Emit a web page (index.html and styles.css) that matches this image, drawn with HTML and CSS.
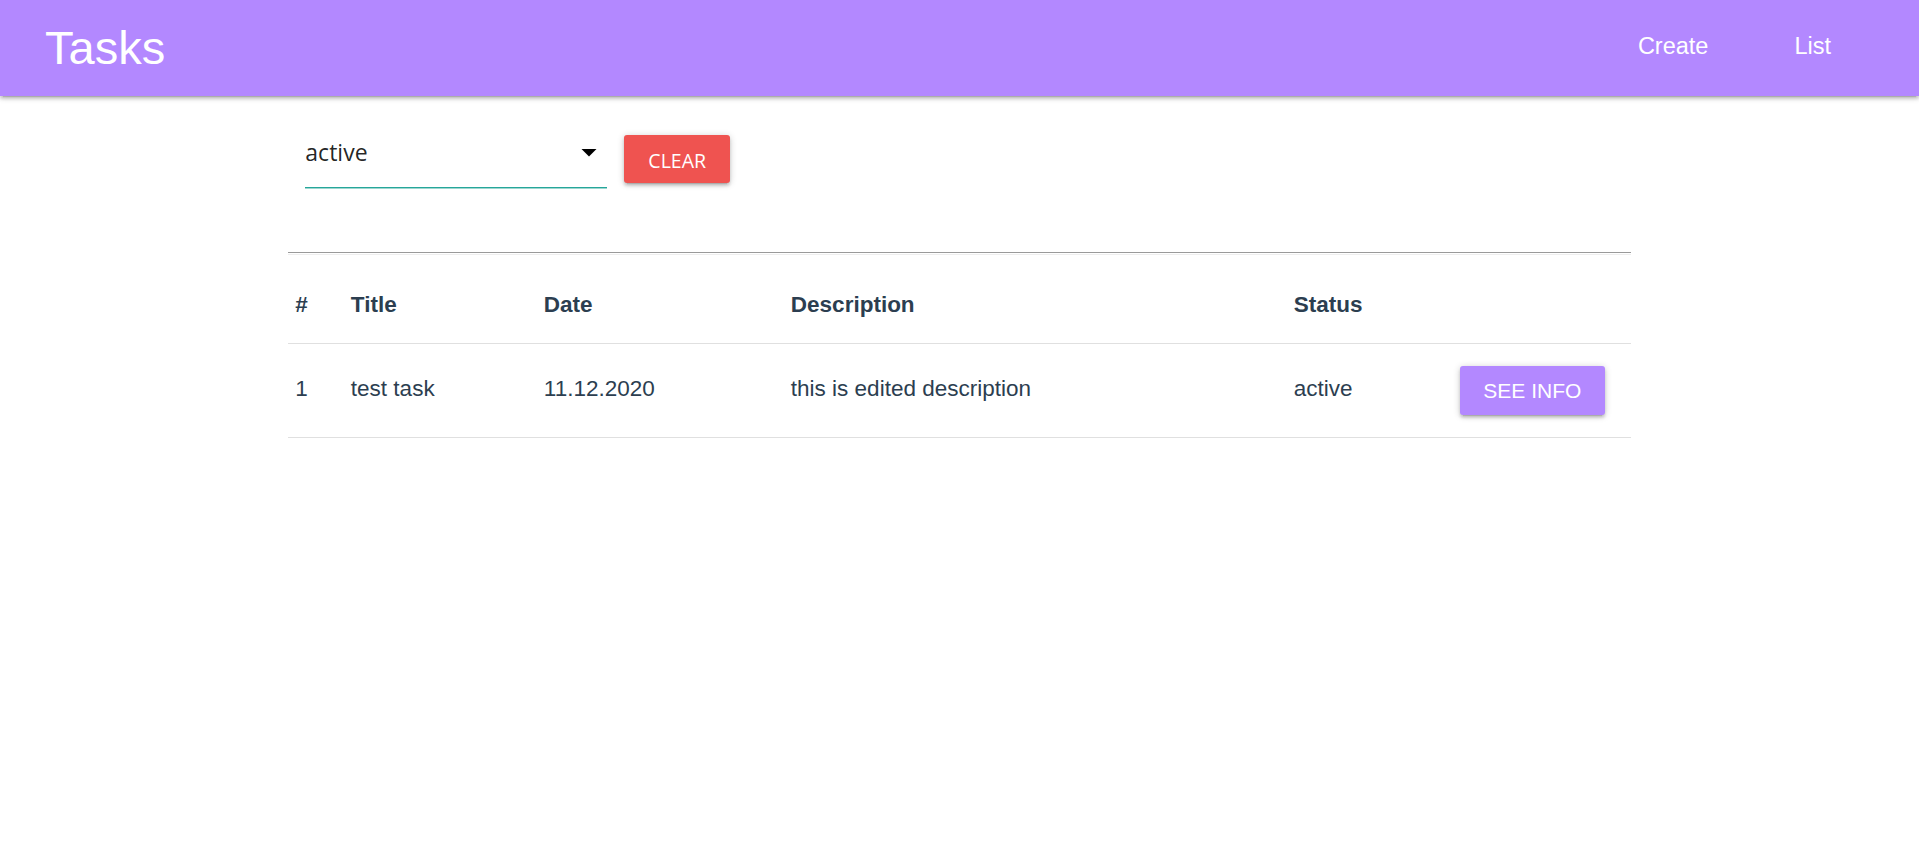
FILE: index.html
```html
<!DOCTYPE html>
<html lang="en">
<head>
<meta charset="utf-8">
<title>Tasks</title>
<link rel="stylesheet" href="styles.css">
</head>
<body>
<header class="navbar">
  <a class="brand" href="#">Tasks</a>
  <ul class="nav-links">
    <li><a href="#">Create</a></li>
    <li><a href="#">List</a></li>
  </ul>
</header>
<main class="container">
  <div class="filter-row">
    <div class="select">
      <span class="select-value">active</span>
      <svg class="caret" viewBox="0 0 24 24" width="36" height="36"><path d="M7 10l5 5 5-5z" fill="#000"/></svg>
    </div>
    <button class="btn-clear">Clear</button>
  </div>
  <div class="divider"></div>
  <table class="tasks">
    <colgroup>
      <col class="c-num"><col class="c-title"><col class="c-date"><col class="c-desc"><col class="c-status"><col class="c-action">
    </colgroup>
    <thead>
      <tr><th>#</th><th>Title</th><th>Date</th><th>Description</th><th>Status</th><th></th></tr>
    </thead>
    <tbody>
      <tr>
        <td class="txt">1</td>
        <td class="txt">test task</td>
        <td class="txt">11.12.2020</td>
        <td class="txt">this is edited description</td>
        <td class="txt">active</td>
        <td><a class="btn-info" href="#">SEE INFO</a></td>
      </tr>
    </tbody>
  </table>
</main>
</body>
</html>
```

FILE: styles.css
```css
html, body {
  margin: 0;
  padding: 0;
  background: #fff;
}
body {
  font-family: "Liberation Sans", Arial, Helvetica, sans-serif;
  color: #2c3e50;
}
.navbar {
  height: 96px;
  background: #b388ff;
  display: flex;
  align-items: center;
  justify-content: space-between;
  padding-left: 45px;
  box-shadow: 0 3px 3px 0 rgba(0,0,0,0.14), 0 4px 1px -3px rgba(0,0,0,0.12), 0 1px 7px 0 rgba(0,0,0,0.2);
  position: relative;
  z-index: 2;
}
.brand {
  color: #fff;
  text-decoration: none;
  font-size: 47px;
  line-height: 96px;
}
.nav-links {
  list-style: none;
  margin: 0 45px 0 0;
  padding: 0;
  display: flex;
}
.nav-links a {
  display: block;
  color: #fff;
  text-decoration: none;
  font-size: 23.5px;
  line-height: 93px;
  padding: 0 43px 3px;
}
.container {
  width: 70%;
  margin: 0 auto;
}
.filter-row {
  display: flex;
  align-items: flex-start;
  margin-top: 20px;
  padding-left: 17.5px;
}
.select {
  width: 302px;
  height: 71px;
  display: flex;
  align-items: center;
  justify-content: space-between;
  border-bottom: 1px solid #26a69a;
  box-shadow: 0 1px 0 0 rgba(38,166,154,0.45);
}
.select-value {
  font-family: "Open Sans", "Noto Sans", sans-serif;
  font-size: 23px;
  color: rgba(0,0,0,0.87);
}
.caret {
  display: block;
}
.btn-clear {
  margin: 19px 0 0 17px;
  height: 48px;
  box-sizing: border-box;
  padding: 3px 24px 0;
  line-height: 45px;
  border: none;
  border-radius: 3px;
  background: #ef5350;
  color: #fff;
  font-family: "Open Sans", "Noto Sans", sans-serif;
  font-size: 19.5px;
  text-transform: uppercase;
  letter-spacing: 0;
  box-shadow: 0 3px 3px 0 rgba(0,0,0,0.14), 0 4px 1px -3px rgba(0,0,0,0.12), 0 1px 7px 0 rgba(0,0,0,0.2);
}
.divider {
  margin-top: 64px;
  height: 1px;
  border-top: 1px solid #9a9a9a;
  border-bottom: 1px solid #eeeeee;
}
.tasks {
  width: 100%;
  margin-top: 11px;
  border-collapse: collapse;
  table-layout: fixed;
  font-size: 22.5px;
}
.c-num { width: 55.5px; }
.c-title { width: 193px; }
.c-date { width: 247px; }
.c-desc { width: 503px; }
.c-status { width: 166px; }
.c-action { width: 179px; }
.tasks tr {
  border-bottom: 1px solid rgba(0,0,0,0.12);
}
.tasks th {
  text-align: left;
  font-weight: bold;
  padding: 22px 7.5px;
  line-height: 33px;
}
.tasks td {
  padding: 22px 7.5px;
  line-height: 33px;
  vertical-align: middle;
}
.tasks td.txt {
  padding-top: 20px;
  padding-bottom: 24px;
}
.btn-info {
  display: inline-block;
  height: 49px;
  line-height: 49px;
  padding: 0 23.5px;
  vertical-align: top;
  background: #b388ff;
  color: #fff;
  text-decoration: none;
  font-size: 21px;
  border-radius: 3px;
  box-shadow: 0 3px 3px 0 rgba(0,0,0,0.14), 0 4px 1px -3px rgba(0,0,0,0.12), 0 1px 7px 0 rgba(0,0,0,0.2);
}
```
